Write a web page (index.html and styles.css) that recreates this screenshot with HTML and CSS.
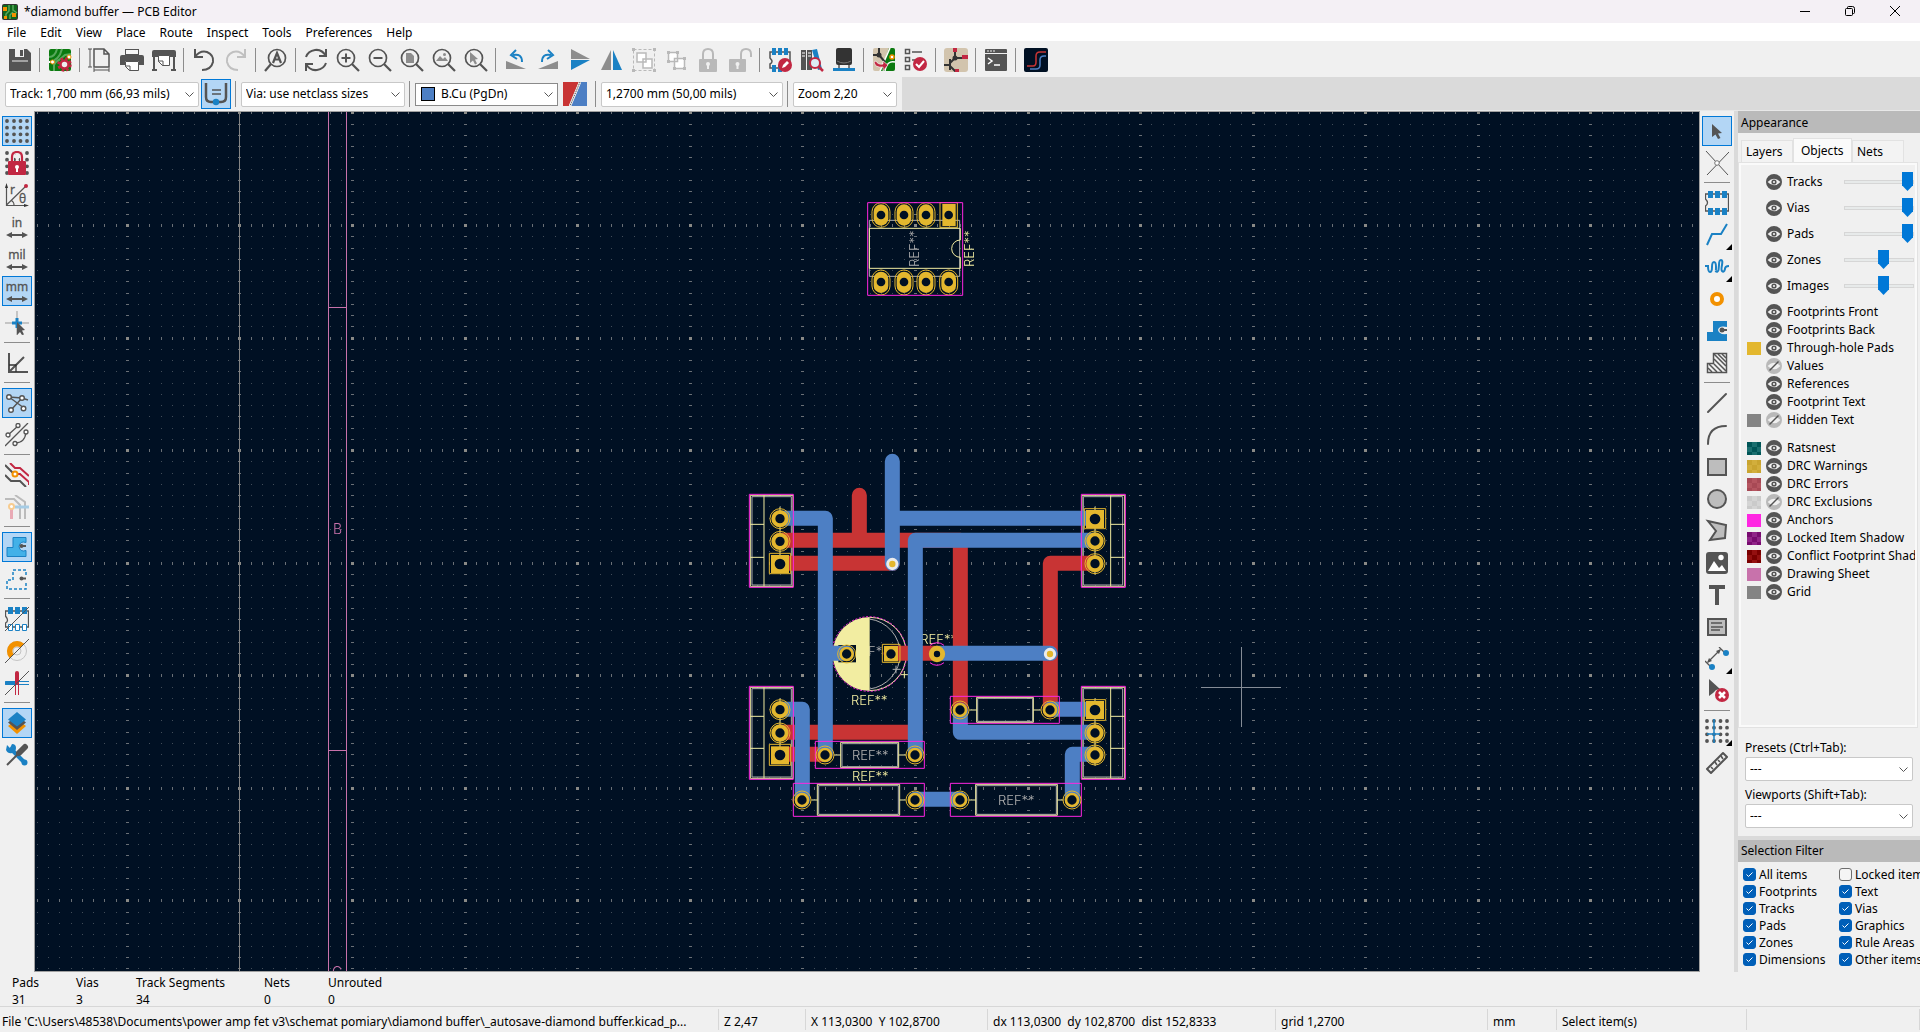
FILE: index.html
```html
<!DOCTYPE html>
<html lang="en">
<head>
<meta charset="utf-8">
<title>*diamond buffer — PCB Editor</title>
<link rel="stylesheet" href="styles.css">
</head>
<body>
<svg class="defs" aria-hidden="true">
  <symbol id="eye" viewBox="0 0 16 16"><circle cx="8" cy="8" r="8" fill="#545454"/><path d="M1.600 8Q8 1.500 14.400 8Q8 14.500 1.600 8Z" fill="#f0f0f0"/><circle cx="8" cy="8" r="2.600" fill="#545454"/><circle cx="8" cy="8" r="1.100" fill="#f0f0f0"/></symbol>
  <symbol id="eye-off" viewBox="0 0 16 16"><circle cx="8" cy="8" r="8" fill="#b9b9b9"/><path d="M1.600 8Q8 1.500 14.400 8Q8 14.500 1.600 8Z" fill="#f0f0f0"/><path d="M3.500 12.500L12.500 3.500" stroke="#545454" stroke-width="1.500"/></symbol>
  <symbol id="lens" viewBox="0 0 24 24"><circle cx="13" cy="10" r="8.500" fill="none" stroke="#545454" stroke-width="1.700"/></symbol>
  <symbol id="glass" viewBox="0 0 24 24"><circle cx="10" cy="10" r="8.500" fill="none" stroke="#545454" stroke-width="1.700"/><path d="M16 16l7 7" stroke="#545454" stroke-width="2.200"/></symbol>
  <symbol id="units" viewBox="0 0 24 24"><path d="M5 20h14" stroke="#545454" stroke-width="2"/><path d="M1 20l6-3v6zM23 20l-6-3v6z" fill="#545454"/></symbol>
  <symbol id="dots" viewBox="0 0 24 24"><path d="M2 2h.01M9 2h.01M15.500 2h.01M22 2h.01M2 8.700h.01M9 8.700h.01M15.500 8.700h.01M22 8.700h.01M2 15.300h.01M9 15.300h.01M15.500 15.300h.01M22 15.300h.01M2 22h.01M9 22h.01M15.500 22h.01M22 22h.01" stroke="#545454" stroke-width="3.800" stroke-linecap="round"/></symbol>
</svg>

<header class="titlebar">
  <svg class="logo" viewBox="0 0 16 16"><rect width="16" height="16" rx="2" fill="#333"/><rect x="1" y="1" width="14" height="14" fill="#10671c"/><path d="M7 1v6l-3 3v5M11 1v5l4 3M8 15v-4l3-3" stroke="#55a95b" stroke-width="1.500" fill="none"/><path d="M1 3h4v4H1zM10 9h4v4h-4zM2 12h3v3H2z" fill="#f29100"/></svg>
  <span>*diamond buffer — PCB Editor</span>
  <div class="window-buttons">
    <button aria-label="Minimize"><svg viewBox="0 0 10 10"><path d="M0 5.500h10"/></svg></button>
    <button aria-label="Restore"><svg viewBox="0 0 10 10"><rect x=".5" y="2.500" width="7" height="7" rx="1"/><path d="M2.500 2.500v-1q0-1 1-1h4q2 0 2 2v4q0 1-1 1h-1"/></svg></button>
    <button aria-label="Close"><svg viewBox="0 0 10 10"><path d="M0 0l10 10M10 0L0 10"/></svg></button>
  </div>
</header>

<nav class="menubar">
  <button>File</button><button>Edit</button><button>View</button><button>Place</button><button>Route</button><button>Inspect</button><button>Tools</button><button>Preferences</button><button>Help</button>
</nav>

<div class="toolbar main-tools">
  <button aria-label="Save"><svg viewBox="0 0 24 24"><path d="M1 1h18l4 4v18H1z" fill="#545454"/><path d="M7 1h9v8H7zM4 13h16v0H4z" fill="#f0f0f0"/><path d="M12 2h3v6h-3z" fill="#545454"/><path d="M4 13h16" stroke="#f0f0f0"/></svg></button>
  <i class="sep"></i>
  <button aria-label="Board setup"><svg viewBox="0 0 24 24"><rect x="1" y="1" width="22" height="22" rx="2" fill="#0b7a10"/><path d="M1 9q6 0 8-8M1 14q10-1 13-13M6 23v-6q1-3 5-5l6-5 6-1" stroke="#58a85c" stroke-width="2" fill="none"/><path d="M1 14h2M22 9h1" stroke="#fff" stroke-width="2"/><circle cx="4.500" cy="14" r="2" fill="#fff" stroke="#f29100"/><circle cx="21" cy="9" r="2" fill="#fff" stroke="#f29100"/><circle cx="16.500" cy="16.500" r="4" fill="#eee" stroke="#c22742" stroke-width="2.500"/><circle cx="16.500" cy="16.500" r="6" fill="none" stroke="#c22742" stroke-width="2.500" stroke-dasharray="2.700 2"/></svg></button>
  <i class="sep"></i>
  <button aria-label="Page settings"><svg viewBox="0 0 24 24" fill="none" stroke="#545454"><path d="M6 1h10l5 5v13H6zM16 1v5h5" stroke-width="1.500"/><path d="M2 1v18M0 1h4M0 19h4M6 22h15M6 20v4M21 20v4"/></svg></button>
  <button aria-label="Print"><svg viewBox="0 0 24 24"><path d="M5 1h14v6H5zM0 9q0-2 2-2h20q2 0 2 2v8h-5v-4H5v4H0z" fill="#545454"/><path d="M6 2h12v4H6z" fill="#f7f7f7"/><path d="M5.500 13.500h13v9h-9l-4-4z" fill="#fff" stroke="#545454"/><path d="M5 18h5v5" fill="none" stroke="#545454"/></svg></button>
  <button aria-label="Plot"><svg viewBox="0 0 24 24"><path d="M0 4q0-2 2-2h20q2 0 2 2v5H0zM1 9h2v13H1zM21 9h2v13h-2zM0 21h5v2H0zM19 21h5v2h-5z" fill="#545454"/><path d="M6.500 7.500h11v10h-7l-4-4z" fill="#fff" stroke="#545454"/><path d="M6 13h5v5" fill="none" stroke="#545454"/></svg></button>
  <i class="sep"></i>
  <button aria-label="Undo"><svg viewBox="0 0 24 24" fill="none" stroke="#545454" stroke-width="2"><path d="M3 1v8h8M3 9Q8 2 15 4q7 3 6 10-2 8-11 8"/></svg></button>
  <button aria-label="Redo" disabled><svg viewBox="0 0 24 24" fill="none" stroke="#c0c0c0" stroke-width="2"><path d="M21 1v8h-8M21 9Q16 2 9 4 2 7 3 14q2 8 11 8"/></svg></button>
  <i class="sep"></i>
  <button aria-label="Find"><svg viewBox="0 0 24 24"><use href="#lens"/><path d="M7 16l-6 7" stroke="#545454" stroke-width="2.200"/><path d="M9 15l4-10 4 10M10 11.500h6" fill="none" stroke="#545454" stroke-width="2.200"/></svg></button>
  <i class="sep"></i>
  <button aria-label="Refresh"><svg viewBox="0 0 24 24" fill="none" stroke="#545454" stroke-width="2"><path d="M2 9Q4 3 11 2q7-1 11 6M22 1v7h-7M22 15q-2 6-9 7-7 1-11-6M2 23v-7h7"/></svg></button>
  <button aria-label="Zoom in"><svg viewBox="0 0 24 24"><use href="#glass"/><path d="M10 5.500v9M5.500 10h9" stroke="#545454" stroke-width="2"/></svg></button>
  <button aria-label="Zoom out"><svg viewBox="0 0 24 24"><use href="#glass"/><path d="M5.500 10h9" stroke="#545454" stroke-width="2"/></svg></button>
  <button aria-label="Zoom to page"><svg viewBox="0 0 24 24"><use href="#glass"/><path d="M6 5h5l3 3v7H6z" fill="#8d8d8d"/></svg></button>
  <button aria-label="Zoom to objects"><svg viewBox="0 0 24 24"><use href="#glass"/><path d="M4 13l4-5 3 3 2-2 3 4z" fill="#8d8d8d"/><circle cx="12.500" cy="6.500" r="1.500" fill="#8d8d8d"/></svg></button>
  <button aria-label="Zoom to selection"><svg viewBox="0 0 24 24"><use href="#glass"/><path d="M6 4l8 7-3 .5 2 4-2 1-2-4-3 2.500z" fill="#8d8d8d"/></svg></button>
  <i class="sep"></i>
  <button aria-label="Rotate left"><svg viewBox="0 0 24 24"><path d="M2 13l20 8H2z" fill="#8d8d8d"/><path d="M9 7q9-2 9 7" fill="none" stroke="#1a81c4" stroke-width="2"/><path d="M12 2L7 7l6 4" fill="none" stroke="#1a81c4" stroke-width="2"/></svg></button>
  <button aria-label="Rotate right"><svg viewBox="0 0 24 24"><path d="M22 13L2 21h20z" fill="#8d8d8d"/><path d="M15 7q-9-2-9 7" fill="none" stroke="#1a81c4" stroke-width="2"/><path d="M12 2l5 5-6 4" fill="none" stroke="#1a81c4" stroke-width="2"/></svg></button>
  <button aria-label="Mirror vertically"><svg viewBox="0 0 24 24"><path d="M3 1l19 10H3z" fill="#8d8d8d"/><path d="M3 22l19-10H3z" fill="#1a81c4"/></svg></button>
  <button aria-label="Mirror horizontally"><svg viewBox="0 0 24 24"><path d="M11 2v20H1z" fill="#8d8d8d"/><path d="M13 2v20h9z" fill="#1a81c4"/></svg></button>
  <button aria-label="Group" disabled><svg viewBox="0 0 24 24" fill="#fff" stroke="#b9b9b9"><rect x="1.500" y="1.500" width="21" height="21" fill="none" stroke-dasharray="3 2"/><path d="M11 11h9v9h-9zM5 5h9v9H5z" stroke-width="1.500"/><path d="M0 0h3v3H0zM21 0h3v3h-3zM0 21h3v3H0zM21 21h3v3h-3z" fill="#b9b9b9" stroke="none"/></svg></button>
  <button aria-label="Ungroup" disabled><svg viewBox="0 0 24 24" fill="#fff" stroke="#b9b9b9"><path d="M10.500 10.500h10v10h-10zM4.500 4.500h9v9h-9z" stroke-width="1.500"/><path d="M3 3h3v3H3zM12 3h3v3h-3zM3 12h3v3H3zM9 19h3v3H9zM19 19h3v3h-3zM19 9h3v3h-3z" fill="#b9b9b9" stroke="none"/></svg></button>
  <button aria-label="Lock" disabled><svg viewBox="0 0 24 24"><path d="M7 11V6q0-5 5-5t5 5v5" fill="none" stroke="#b9b9b9" stroke-width="2"/><rect x="3" y="11" width="18" height="13" rx="1" fill="#b9b9b9"/><circle cx="12" cy="16" r="2" fill="#f0f0f0"/><path d="M11 16h2v5h-2z" fill="#f0f0f0"/></svg></button>
  <button aria-label="Unlock" disabled><svg viewBox="0 0 24 24"><path d="M13 11V6q0-5 5-5t5 5v3" fill="none" stroke="#b9b9b9" stroke-width="2"/><rect x="1" y="11" width="17" height="13" rx="1" fill="#b9b9b9"/><circle cx="9.500" cy="16" r="2" fill="#f0f0f0"/><path d="M8.500 16h2v5h-2z" fill="#f0f0f0"/></svg></button>
  <i class="sep"></i>
  <button aria-label="Footprint editor"><svg viewBox="0 0 24 24"><path d="M2 4h20v16H2v-4q4-2 0-6z" fill="none" stroke="#545454" stroke-width="1.500"/><path d="M4 0h4v7H4zM10 0h4v7h-4zM16 0h4v7h-4zM4 17h4v7H4zM10 17h4v7h-4z" fill="#1a81c4"/><circle cx="17" cy="17" r="7" fill="#c22742"/><path d="M14 20l1-3 4-4 2 2-4 4z" fill="#fff"/></svg></button>
  <button aria-label="Footprint library"><svg viewBox="0 0 24 24"><path d="M1 2h5v20H1zM7 2h5v20H7z" fill="#545454"/><path d="M2 5h3M2 8h3M8 5h3M8 8h3" stroke="#fff"/><path d="M12 2l5-1 5 20-4 1z" fill="#1a81c4"/><circle cx="15" cy="15" r="5" fill="#dcecf5" stroke="#c22742" stroke-width="2"/><path d="M19 19l4 4" stroke="#c22742" stroke-width="2.500"/></svg></button>
  <button aria-label="3D viewer"><svg viewBox="0 0 24 24"><rect x="4" y="0" width="16" height="17" rx="2" fill="#333"/><path d="M5 13q7 4 14 0" stroke="#777" fill="none"/><path d="M7 17v3M17 17v3" stroke="#545454" stroke-width="1.500"/><path d="M1 20h22v3H1z" fill="#1a81c4"/></svg></button>
  <i class="sep"></i>
  <button aria-label="Update from schematic"><svg viewBox="0 0 24 24"><rect x="1" y="0" width="22" height="23" rx="2" fill="#d2c4ad"/><path d="M17 0h4q2 0 2 2v19q0 2-2 2H9z" fill="#0b7a10"/><path d="M18 0L8 23M23 14q-8-2-10 9" stroke="#fff" stroke-width="1.500" fill="none"/><path d="M7 0v7H1M7 7l6 7" stroke="#333" stroke-width="2" fill="none"/><circle cx="7" cy="7" r="2.500" fill="#333"/><circle cx="20" cy="9" r="2" fill="#fff" stroke="#f29100" stroke-width="1.500"/><path d="M2 14q1 6 9 5v4l5-6-5-4v3q-5 1-7-3z" fill="#c22742" stroke="#fff" stroke-width=".6"/></svg></button>
  <button aria-label="Design rules check"><svg viewBox="0 0 24 24"><path d="M1.500 1.500h4v4h-4zM1.500 9.500h4v4h-4zM1.500 17.500h4v4h-4zM8 4h10M8 12h5" fill="none" stroke="#545454" stroke-width="1.500"/><circle cx="16" cy="16" r="7" fill="#c22742"/><path d="M12 16l3 3 5-6" fill="none" stroke="#fff" stroke-width="2"/></svg></button>
  <i class="sep"></i>
  <button aria-label="Schematic editor"><svg viewBox="0 0 24 24"><rect x="0" y="0" width="24" height="24" rx="3" fill="#d2c4ad"/><path d="M0 17h6M6 11v11M6 15l5-5M6 18l6 6M11 10V0M11 10h11" stroke="#333" stroke-width="2" fill="none"/><path d="M9 0h4v4H9zM18 7h6v4h-6zM11 21h4v3h-4z" fill="#c22742"/><circle cx="11" cy="10" r="2.500" fill="#333"/></svg></button>
  <i class="sep"></i>
  <button aria-label="Scripting console"><svg viewBox="0 0 24 24"><rect x="1" y="1" width="22" height="22" rx="1" fill="#545454"/><path d="M1 5.500h22" stroke="#f0f0f0"/><path d="M3 3h2M6 3h2M9 3h2" stroke="#f0f0f0"/><path d="M4 10l4 3-4 3M10 17h6" stroke="#fff" stroke-width="1.500" fill="none"/></svg></button>
  <i class="sep"></i>
  <button aria-label="Plugin"><svg viewBox="0 0 24 24"><rect width="24" height="24" rx="2" fill="#001023"/><path d="M3 18h6q3 0 3-4V8q0-4 4-4h6" fill="none" stroke="#c83434" stroke-width="1.500"/><path d="M6 21h6q4 0 4-4v-5q0-4 4-4h2" fill="none" stroke="#4d7fc4" stroke-width="1.500"/></svg></button>
</div>

<div class="option-row">
  <div class="toolbar options">
    <select class="combo track" aria-label="Track width"><option>Track: 1,700 mm (66,93 mils)</option></select>
    <button class="on" aria-label="Use track width"><svg viewBox="0 0 24 24"><path d="M2 1v14q0 5 5 5h10q5 0 5-5V1" fill="none" stroke="#545454" stroke-width="2.500"/><path d="M8 8h9M8 12h9" stroke="#545454" stroke-width="1.300"/><circle cx="12" cy="20" r="3.200" fill="#1a81c4"/></svg></button>
    <i class="sep"></i>
    <select class="combo via" aria-label="Via size"><option>Via: use netclass sizes</option></select>
    <i class="sep"></i>
    <span class="layer-box"><i class="layer-color"></i><select class="combo layer" aria-label="Active layer"><option>B.Cu (PgDn)</option></select></span>
    <button class="layer-pair" aria-label="Layer pair"><svg viewBox="0 0 24 24"><path d="M0 0h16L6 24H0z" fill="#c83434"/><path d="M18 0h6v24H8z" fill="#4d7fc4"/><path d="M17 0L7 24" stroke="#eee" stroke-width="2.500"/><path d="M17 0L7 24" stroke="#444" stroke-dasharray="1 1"/></svg></button>
    <i class="sep"></i>
    <select class="combo grid" aria-label="Grid"><option>1,2700 mm (50,00 mils)</option></select>
    <i class="sep"></i>
    <select class="combo zoom" aria-label="Zoom"><option>Zoom 2,20</option></select>
  </div>
</div>

<main class="workspace">
  <div class="side-tools">
    <button class="on" aria-label="Show grid"><svg viewBox="0 0 24 24"><use href="#dots"/></svg></button>
    <button aria-label="Grid overrides"><svg viewBox="0 0 24 24"><use href="#dots"/><path d="M7 11V6q0-5 5-5t5 5v5" fill="none" stroke="#f0f0f0" stroke-width="4"/><path d="M7 11V6q0-5 5-5t5 5v5" fill="none" stroke="#c22742" stroke-width="2.200"/><rect x="3" y="10" width="18" height="14" rx="1" fill="#c22742"/><circle cx="12" cy="16" r="2" fill="#fff"/><path d="M11 16h2v5h-2z" fill="#fff"/></svg></button>
    <button aria-label="Polar coordinates"><svg viewBox="0 0 24 24"><path d="M1.500 23V3M1 22.500h20M1.500 22L21 3M6 17q3 2 3 5" fill="none" stroke="#545454" stroke-width="1.200"/><path d="M1.500 0l-1.500 5h3zM24 22.500l-5-1.500v3z" fill="#333"/><circle cx="21" cy="3" r="2" fill="#c22742"/><text x="5" y="11" font-size="11">r</text><text x="14" y="20" font-size="12" font-style="italic">θ</text></svg></button>
    <button aria-label="Inches"><svg viewBox="0 0 24 24"><use href="#units"/><text x="12" y="12" text-anchor="middle">in</text></svg></button>
    <button aria-label="Mils"><svg viewBox="0 0 24 24"><use href="#units"/><text x="12" y="12" text-anchor="middle">mil</text></svg></button>
    <button class="on" aria-label="Millimetres"><svg viewBox="0 0 24 24"><use href="#units"/><text x="12" y="12" text-anchor="middle">mm</text></svg></button>
    <button aria-label="Full-window crosshairs"><svg viewBox="0 0 24 24"><path d="M12 0v24M0 12h24" stroke="#999"/><path d="M12 7v10M7 12h10" stroke="#1a81c4" stroke-width="3"/><path d="M12 11l8 8-3 .5 2 4-2 .5-2-3-3 3z" fill="#545454"/></svg></button>
    <i class="sep"></i>
    <button aria-label="Limit angles"><svg viewBox="0 0 24 24"><path d="M4 2v19h19M4 21L19 6" fill="none" stroke="#545454" stroke-width="2"/><path d="M4 14h7v7" fill="none" stroke="#333" stroke-width="1.300"/></svg></button>
    <i class="sep"></i>
    <button class="on" aria-label="Show ratsnest"><svg viewBox="0 0 24 24" fill="#fff" stroke="#545454" stroke-width="1.400"><path d="M4 6l13 1 6 2M4 6l15 11M17 7L6 19" fill="none"/><circle cx="4" cy="6" r="2.300"/><circle cx="17" cy="7" r="2.300"/><circle cx="18.500" cy="17.500" r="2.300"/><circle cx="6" cy="19" r="2.300"/></svg></button>
    <button aria-label="Curved ratsnest"><svg viewBox="0 0 24 24" fill="#fff" stroke="#545454" stroke-width="1.300"><path d="M0 23L23 0M3 12L13 3M10 20q10 0 11-11" fill="none"/><circle cx="3" cy="12" r="2"/><circle cx="13" cy="2.500" r="2"/><circle cx="21" cy="9" r="2"/><circle cx="10" cy="20.500" r="2"/></svg></button>
    <i class="sep"></i>
    <button aria-label="High contrast nets"><svg viewBox="0 0 24 24" fill="none" stroke-width="2"><path d="M0 2l10 10M0 12l6 6h9l6 6" stroke="#545454"/><path d="M5 0l5 5h5l9 8M10 11h5l9 8v3" stroke="#c22742"/><circle cx="10" cy="11" r="2.500" fill="#fff" stroke="#f29100"/></svg></button>
    <button aria-label="Net highlighting" disabled><svg viewBox="0 0 24 24" fill="none"><path d="M0 4h9l6 6v14M10 0l10 7v17" stroke="#bbb" stroke-width="2"/><path d="M10 12h14" stroke="#a6cce5" stroke-width="3"/><path d="M6.500 14v10" stroke="#e9aab5" stroke-width="3"/><circle cx="6.500" cy="11.500" r="2.500" fill="#fff" stroke="#f7cc90" stroke-width="2"/></svg></button>
    <i class="sep"></i>
    <button class="on" aria-label="Show zone fills"><svg viewBox="0 0 24 24"><path d="M2 21.500v-9h6v-10h13v5q-6-2-7 4 1 6 7 4v6z" fill="#43b1e8" stroke="#1a81c4"/><circle cx="16.500" cy="11" r="2" fill="#545454"/><path d="M16 11h5" stroke="#545454" stroke-width="2"/></svg></button>
    <button aria-label="Show zone outlines"><svg viewBox="0 0 24 24"><path d="M21 16v6H2v-9h6V3h13v5" fill="none" stroke="#1a81c4" stroke-width="1.500" stroke-dasharray="3 2"/><circle cx="16.500" cy="11.500" r="2" fill="#545454"/><path d="M16 11.500h5" stroke="#545454" stroke-width="2"/></svg></button>
    <i class="sep"></i>
    <button aria-label="Sketch footprint pads"><svg viewBox="0 0 24 24"><path d="M.5 4h23v16H.5v-4q4-2 0-7z" fill="none" stroke="#545454" stroke-width="1.300"/><path d="M3 0h5v7H3zM10 0h5v7h-5zM17 0h5v7h-5z" fill="#1a81c4"/><path d="M3.500 17.500h4v6h-4zM10.500 17.500h4v6h-4zM17.500 17.500h4v6h-4z" fill="#fff" stroke="#1a81c4"/><path d="M0 24L24 0" stroke="#545454"/></svg></button>
    <button aria-label="Sketch vias"><svg viewBox="0 0 24 24"><circle cx="12" cy="12" r="9.500" fill="none" stroke="#c4c4c4"/><circle cx="12" cy="12" r="4" fill="none" stroke="#c4c4c4"/><path d="M6.700 17.300A7.500 7.500 0 0 1 17.300 6.700" fill="none" stroke="#f29100" stroke-width="5.500"/><path d="M0 24L24 0" stroke="#545454"/></svg></button>
    <button aria-label="Sketch tracks"><svg viewBox="0 0 24 24"><path d="M1 12h11" stroke="#1a81c4" stroke-width="4" stroke-linecap="round"/><path d="M12 10.500h12M12 13.500h12" stroke="#1a81c4"/><path d="M12 2v10" stroke="#c22742" stroke-width="4" stroke-linecap="round"/><path d="M10.500 12v12M13.500 12v12" stroke="#c22742"/><path d="M0 24L24 0" stroke="#545454"/></svg></button>
    <i class="sep"></i>
    <button class="on" aria-label="Layers manager"><svg viewBox="0 0 24 24"><path d="M3 15l9-7 9 7-9 8z" fill="#f29100"/><path d="M3 11.500l9-7 9 7-9 7.500z" fill="#545454"/><path d="M3 8.500L12 1l9 7.500-9 7z" fill="#1a81c4"/></svg></button>
    <button aria-label="Properties"><svg viewBox="0 0 24 24"><path d="M5 5l14 14" stroke="#1a81c4" stroke-width="4"/><path d="M2 2l3 3 2-4q4 0 4 4t-4 5-6-3z" fill="#1a81c4"/><circle cx="19.500" cy="19.500" r="3" fill="#1a81c4"/><path d="M2 22L13 11" stroke="#545454" stroke-width="2"/><path d="M14 10l6-6" stroke="#545454" stroke-width="6" stroke-linecap="round"/></svg></button>
  </div>

  <section class="board" aria-label="Board">
    <canvas class="grid-dots"></canvas>
    <svg class="drawing">
      <g transform="translate(-35 -112)">
        <path d="M239.500 112V972" stroke="#848484"/>
        <path d="M328.500 112V972M346.500 112V972M328 307.500h18M328 750.500h18" stroke="#c872ab" fill="none"/>
        <text class="sheet" x="333" y="534">B</text><text class="sheet" x="332" y="977">C</text>
        <g class="fine" transform="translate(850 190) scale(.33333)">
          <path d="M58 91h271v168H58z" stroke="#afafaf"/>
          <g fill="#e3b72e" stroke="none">
            <rect x="71" y="43" width="44" height="64" rx="22"/><rect x="140" y="43" width="44" height="64" rx="22"/><rect x="206" y="43" width="44" height="64" rx="22"/><rect x="277" y="42" width="40" height="66"/>
            <rect x="71" y="245" width="44" height="64" rx="22"/><rect x="140" y="245" width="44" height="64" rx="22"/><rect x="206" y="245" width="44" height="64" rx="22"/><rect x="274" y="245" width="44" height="64" rx="22"/>
          </g>
          <g stroke="#e3b72e"><rect x="66" y="38" width="54" height="74" rx="27"/><rect x="135" y="38" width="54" height="74" rx="27"/><rect x="201" y="38" width="54" height="74" rx="27"/><rect x="270" y="38" width="52" height="74"/><rect x="66" y="240" width="54" height="75" rx="27"/><rect x="135" y="240" width="54" height="75" rx="27"/><rect x="201" y="240" width="54" height="75" rx="27"/><rect x="269" y="240" width="54" height="75" rx="27"/></g>
          <g fill="#001023" stroke="none"><circle cx="93" cy="75" r="13"/><circle cx="162" cy="75" r="13"/><circle cx="228" cy="75" r="13"/><circle cx="296" cy="75" r="13"/><circle cx="93" cy="276" r="13"/><circle cx="162" cy="276" r="13"/><circle cx="228" cy="276" r="13"/><circle cx="296" cy="276" r="13"/></g>
          <path d="M331 150V115H58v120h273v-33a26 26 0 0 1 0-52" stroke="#f2eda1"/>
          <path d="M53 38h285v278H53z" stroke="#ff26e2"/>
          <text class="ref fab" transform="translate(207 231) rotate(-90)">REF**</text>
          <text class="ref" transform="translate(372 231) rotate(-90)">REF**</text>
        </g>
        <g class="fine" transform="translate(740 440) scale(.33333)">
          <g stroke="#afafaf" stroke-width="3">
            <path d="M36 170h118v265H36zM36 746h118v265H36zM1030 170h118v265h-118zM1030 746h118v265h-118zM306 911h167v69H306zM236 1037h239v86H236zM713 775h165v69H713zM710 1037h239v86H710z"/>
            <path d="M389 537a106 106 0 0 1 0 210M458 688h24M468 677v23"/>
          </g>
          <text class="ref fab" x="361" y="648">EF*</text>
          <path d="M389 531a111 111 0 0 0 0 222z" fill="#f2eda1" stroke="none"/>
          <path d="M295 615h53v52h-53z" fill="#001023" stroke="none"/>
          <g stroke="#f2eda1">
            <path d="M31 166h128v273H31zM72 166v273M31 253h41M31 352h41M31 742h128v273H31zM72 742v273M31 829h41M31 925h41M1026 166h128v273h-128zM1112 166v273M1112 253h42M1112 352h42M1026 742h128v273h-128zM1112 742v273M1112 829h42M1112 925h42M120 200v170M120 775v170M1065 200v204M1065 775v202"/>
            <path d="M389 532a110 110 0 0 1 0 220M302 907h174v76H302zM282 945h20M476 945h22M232 1033h247v93H232zM214 1080h18M479 1080h18M710 772h170v75H710zM688 810h22M880 810h22M707 1033h245v93H707zM686 1080h21M952 1080h18M482 704h24M493 693v22"/>
          </g>
          <text class="ref" x="541" y="611">REF**</text>
          <circle cx="388" cy="642" r="112" stroke="#ff26e2" stroke-dasharray="6 5"/>
          <g stroke="#c83434" stroke-width="45" stroke-linejoin="round" stroke-linecap="round">
            <path d="M120 301H661V810M120 370H457M358 166V301M1065 370H931V810M453 640H591M120 877H526M120 943H255"/>
          </g>
          <g stroke="#4d7fc4" stroke-width="45" stroke-linejoin="round" stroke-linecap="round">
            <path d="M120 235H256V943M457 64V370M457 235H1065M1065 301H526V943M256 640H320M591 640H931M120 808H187V1080M526 1078H660M1065 943H997V1080M931 808H1065M661 810V877H1065"/>
          </g>
          <g stroke="#ff26e2">
            <path d="M28 163h132v279H28zM28 739h132v279H28zM1024 163h132v279h-132zM1024 739h132v279h-132zM226 904h327v81H226zM160 1030h393v99H160zM631 769h327v81H631zM631 1030h393v99H631z"/>
            <path d="M570 616a32 32 0 0 1 42 0M570 668a32 32 0 0 0 42 0"/>
          </g>
          <g fill="#001023" stroke="#e3b72e" stroke-width="12">
            <circle cx="120" cy="236" r="20"/><circle cx="120" cy="304" r="20"/><circle cx="120" cy="809" r="20"/><circle cx="120" cy="879" r="20"/><circle cx="1065" cy="303" r="20"/><circle cx="1065" cy="371" r="20"/><circle cx="1065" cy="879" r="20"/><circle cx="1065" cy="945" r="20"/>
            <circle cx="591" cy="642" r="17" stroke-width="15"/>
          </g>
          <g fill="#001023" stroke="#e3b72e" stroke-width="8">
            <circle cx="320" cy="642" r="18"/><circle cx="255" cy="945" r="18"/><circle cx="525" cy="945" r="18"/><circle cx="186" cy="1080" r="18"/><circle cx="525" cy="1080" r="18"/><circle cx="660" cy="1080" r="18"/><circle cx="996" cy="1080" r="18"/><circle cx="660" cy="810" r="18"/><circle cx="930" cy="810" r="18"/>
          </g>
          <g fill="#e3b72e" stroke="none"><rect x="93" y="345" width="54" height="54"/><rect x="93" y="919" width="54" height="54"/><rect x="1038" y="210" width="54" height="54"/><rect x="1038" y="783" width="54" height="54"/><rect x="432" y="618" width="42" height="46"/></g>
          <g fill="#001023" stroke="none"><circle cx="120" cy="372" r="16"/><circle cx="120" cy="945" r="16"/><circle cx="1065" cy="237" r="16"/><circle cx="1065" cy="810" r="16"/><circle cx="453" cy="642" r="14"/></g>
          <g stroke="#e3b72e">
            <circle cx="120" cy="236" r="30"/><circle cx="120" cy="304" r="30"/><circle cx="120" cy="809" r="30"/><circle cx="120" cy="879" r="30"/><circle cx="1065" cy="303" r="30"/><circle cx="1065" cy="371" r="30"/><circle cx="1065" cy="879" r="30"/><circle cx="1065" cy="945" r="30"/>
            <circle cx="255" cy="945" r="27"/><circle cx="525" cy="945" r="27"/><circle cx="186" cy="1080" r="27"/><circle cx="525" cy="1080" r="27"/><circle cx="660" cy="1080" r="27"/><circle cx="996" cy="1080" r="27"/><circle cx="660" cy="810" r="27"/><circle cx="930" cy="810" r="27"/><circle cx="320" cy="642" r="27"/>
            <path d="M88 340h64v61H88zM88 913h64v63H88zM1033 206h64v60h-64zM1033 779h64v62h-64zM427 613h53v54h-53z"/>
          </g>
          <g fill="#e3b72e" stroke="#ececec" stroke-width="9"><circle cx="457" cy="372" r="14"/><circle cx="930" cy="642" r="14"/></g>
          <text class="ref" x="333" y="795">REF**</text><text class="ref fab" x="336" y="960">REF**</text><text class="ref" x="336" y="1022">REF**</text><text class="ref fab" x="774" y="1095">REF**</text>
        </g>
        <path d="M1201 687.500h80M1241.500 647v80" stroke="#858c96"/>
      </g>
    </svg>
  </section>

  <div class="side-tools">
    <button class="on" aria-label="Select"><svg viewBox="0 0 24 24"><path d="M7 5l10 9-4 .5 2.500 4.500-2.500 1-2.500-4.500L7 18z" fill="#545454"/></svg></button>
    <button aria-label="Local ratsnest"><svg viewBox="0 0 24 24"><path d="M1 0l22 24M24 1L2 24" stroke="#545454"/><circle cx="12" cy="12" r="2.300" fill="#fff" stroke="#777"/></svg></button>
    <i class="sep"></i>
    <button aria-label="Place footprint"><svg viewBox="0 0 24 24"><path d="M.5 3h23v17H.5v-5q4-3 0-7z" fill="none" stroke="#545454" stroke-width="1.300"/><path d="M3 0h5v7H3zM10 0h5v7h-5zM17 0h5v7h-5zM3 17h5v7H3zM10 17h5v7h-5zM17 17h5v7h-5z" fill="#1a81c4"/></svg></button>
    <button class="more" aria-label="Route tracks"><svg viewBox="0 0 24 24"><path d="M2 22l5-11h9l6-10" fill="none" stroke="#1a81c4" stroke-width="2"/></svg></button>
    <button class="more" aria-label="Tune length"><svg viewBox="0 0 24 24"><path d="M0 11h3q0 6 2 6 2 0 2-5t2-5 2 5-.5 4q2 2 3-1l.5-5q0-5 2-5t1 5 0 6q2 2 3-2 0-3 4-3" fill="none" stroke="#1a81c4" stroke-width="2"/></svg></button>
    <button aria-label="Add via"><svg viewBox="0 0 24 24"><circle cx="12" cy="12" r="5" fill="#fff" stroke="#f29100" stroke-width="4"/></svg></button>
    <button aria-label="Add zone"><svg viewBox="0 0 24 24"><path d="M2 22V13h6V2h14v6q-8-2-9 3 1 5 9 4v7z" fill="#1a81c4"/><circle cx="17" cy="11" r="2.500" fill="#545454"/><path d="M16 11h6" stroke="#545454" stroke-width="2"/></svg></button>
    <button aria-label="Add rule area"><svg viewBox="0 0 24 24"><path d="M2.500 21.500v-9h6v-10h13v19z" fill="none" stroke="#545454" stroke-width="1.500"/><path d="M9 3l12 12M9 8l12 12M13 3l8 8M17 3l4 4M9 13l8 8M4 13l8 8M3 17l4 4" stroke="#545454" stroke-width="1.500"/></svg></button>
    <i class="sep"></i>
    <button aria-label="Draw line"><svg viewBox="0 0 24 24"><path d="M3 21L21 3" stroke="#545454" stroke-width="2" stroke-linecap="round"/></svg></button>
    <button aria-label="Draw arc"><svg viewBox="0 0 24 24"><path d="M3 21Q3 3 21 3" fill="none" stroke="#545454" stroke-width="2" stroke-linecap="round"/></svg></button>
    <button aria-label="Draw rectangle"><svg viewBox="0 0 24 24"><path d="M3 4h18v16H3z" fill="#bdbdbd" stroke="#545454" stroke-width="2"/></svg></button>
    <button aria-label="Draw circle"><svg viewBox="0 0 24 24"><circle cx="12" cy="12" r="9" fill="#bdbdbd" stroke="#545454" stroke-width="2"/></svg></button>
    <button aria-label="Draw polygon"><svg viewBox="0 0 24 24"><path d="M3 2l18 4-1 13-15 2 6-9z" fill="#bdbdbd" stroke="#545454" stroke-width="2"/></svg></button>
    <button aria-label="Place image"><svg viewBox="0 0 24 24"><rect x="1" y="1" width="22" height="22" rx="3" fill="#545454"/><path d="M3 20l6-10 5 7 3-3 4 6z" fill="#fff"/><circle cx="16" cy="6.500" r="2.700" fill="#fff"/></svg></button>
    <button aria-label="Add text"><svg viewBox="0 0 24 24"><path d="M4 2h16v4h-6v16h-4V6H4z" fill="#545454"/></svg></button>
    <button aria-label="Add text box"><svg viewBox="0 0 24 24"><path d="M3 4h18v16H3z" fill="#bdbdbd" stroke="#545454" stroke-width="2"/><path d="M6 8h11M6 12h12M6 15h9" stroke="#545454" stroke-width="1.300"/></svg></button>
    <button class="more" aria-label="Add dimension"><svg viewBox="0 0 24 24"><path d="M3 15L15 3M0 14l6 6M14 0l6 6" stroke="#545454" stroke-width="1.300"/><path d="M2 16l2-5 3 3zM16 2l-5 2 3 3z" fill="#545454"/><circle cx="7" cy="20" r="3" fill="#1a81c4"/><circle cx="21" cy="6" r="3" fill="#1a81c4"/></svg></button>
    <button aria-label="Delete"><svg viewBox="0 0 24 24"><path d="M4 0l11 10-4 1-3 3-4 3z" fill="#545454"/><circle cx="17" cy="16" r="7" fill="#c22742"/><path d="M14 13l6 6M20 13l-6 6" stroke="#fff" stroke-width="2.500"/></svg></button>
    <i class="sep"></i>
    <button class="more" aria-label="Grid origin"><svg viewBox="0 0 24 24"><use href="#dots"/><path d="M9 0v24M2 15h13" stroke="#1a81c4" stroke-width="1.500"/></svg></button>
    <button aria-label="Measure"><svg viewBox="0 0 24 24"><path d="M2 18L18 2l4 4L6 22z" fill="none" stroke="#545454" stroke-width="2" stroke-linejoin="round"/><path d="M8 18l-2-2M12 14l-2-3M15 11l-2-2M18 8l-2-3" stroke="#545454" stroke-width="1.600"/></svg></button>
  </div>

  <aside class="panels">
    <h2>Appearance</h2>
    <div class="tabs" role="tablist"><button role="tab">Layers</button><button role="tab" class="current" aria-selected="true">Objects</button><button role="tab">Nets</button></div>
    <div class="objects">
      <div class="row tall"><i></i><button aria-label="Toggle tracks"><svg><use href="#eye"/></svg></button><label for="o1">Tracks</label><input id="o1" type="range" value="100"></div>
      <div class="row tall"><i></i><button aria-label="Toggle vias"><svg><use href="#eye"/></svg></button><label for="o2">Vias</label><input id="o2" type="range" value="100"></div>
      <div class="row tall"><i></i><button aria-label="Toggle pads"><svg><use href="#eye"/></svg></button><label for="o3">Pads</label><input id="o3" type="range" value="100"></div>
      <div class="row tall"><i></i><button aria-label="Toggle zones"><svg><use href="#eye"/></svg></button><label for="o4">Zones</label><input id="o4" type="range" value="58"></div>
      <div class="row tall group-end"><i></i><button aria-label="Toggle images"><svg><use href="#eye"/></svg></button><label for="o5">Images</label><input id="o5" type="range" value="58"></div>
      <div class="row"><i></i><button aria-label="Toggle"><svg><use href="#eye"/></svg></button><span>Footprints Front</span></div>
      <div class="row"><i></i><button aria-label="Toggle"><svg><use href="#eye"/></svg></button><span>Footprints Back</span></div>
      <div class="row"><i class="pads"></i><button aria-label="Toggle"><svg><use href="#eye"/></svg></button><span>Through-hole Pads</span></div>
      <div class="row"><i></i><button aria-label="Toggle"><svg><use href="#eye-off"/></svg></button><span>Values</span></div>
      <div class="row"><i></i><button aria-label="Toggle"><svg><use href="#eye"/></svg></button><span>References</span></div>
      <div class="row"><i></i><button aria-label="Toggle"><svg><use href="#eye"/></svg></button><span>Footprint Text</span></div>
      <div class="row last"><i class="gray"></i><button aria-label="Toggle"><svg><use href="#eye-off"/></svg></button><span>Hidden Text</span></div>
      <div class="row"><i class="ratsnest checker"></i><button aria-label="Toggle"><svg><use href="#eye"/></svg></button><span>Ratsnest</span></div>
      <div class="row"><i class="warn checker"></i><button aria-label="Toggle"><svg><use href="#eye"/></svg></button><span>DRC Warnings</span></div>
      <div class="row"><i class="error checker"></i><button aria-label="Toggle"><svg><use href="#eye"/></svg></button><span>DRC Errors</span></div>
      <div class="row"><i class="excl checker"></i><button aria-label="Toggle"><svg><use href="#eye-off"/></svg></button><span>DRC Exclusions</span></div>
      <div class="row"><i class="anchor"></i><button aria-label="Toggle"><svg><use href="#eye"/></svg></button><span>Anchors</span></div>
      <div class="row"><i class="locked checker"></i><button aria-label="Toggle"><svg><use href="#eye"/></svg></button><span>Locked Item Shadow</span></div>
      <div class="row"><i class="conflict checker"></i><button aria-label="Toggle"><svg><use href="#eye"/></svg></button><span>Conflict Footprint Shadow</span></div>
      <div class="row"><i class="sheet-color"></i><button aria-label="Toggle"><svg><use href="#eye"/></svg></button><span>Drawing Sheet</span></div>
      <div class="row"><i class="gray"></i><button aria-label="Toggle"><svg><use href="#eye"/></svg></button><span>Grid</span></div>
    </div>
    <div class="presets">
      <label for="presets">Presets (Ctrl+Tab):</label>
      <select class="combo" id="presets"><option>---</option></select>
      <label for="views">Viewports (Shift+Tab):</label>
      <select class="combo" id="views"><option>---</option></select>
    </div>
    <h2 class="second">Selection Filter</h2>
    <div class="filter">
      <label><input type="checkbox" checked>All items</label><label><input type="checkbox">Locked items</label>
      <label><input type="checkbox" checked>Footprints</label><label><input type="checkbox" checked>Text</label>
      <label><input type="checkbox" checked>Tracks</label><label><input type="checkbox" checked>Vias</label>
      <label><input type="checkbox" checked>Pads</label><label><input type="checkbox" checked>Graphics</label>
      <label><input type="checkbox" checked>Zones</label><label><input type="checkbox" checked>Rule Areas</label>
      <label><input type="checkbox" checked>Dimensions</label><label><input type="checkbox" checked>Other items</label>
    </div>
  </aside>
</main>

<div class="messages">
  <table>
    <tr><th>Pads</th><th>Vias</th><th>Track Segments</th><th>Nets</th><th>Unrouted</th></tr>
    <tr><td>31</td><td>3</td><td>34</td><td>0</td><td>0</td></tr>
  </table>
</div>

<footer class="status">
  <span class="file">File 'C:\Users\48538\Documents\power amp fet v3\schemat pomiary\diamond buffer\_autosave-diamond buffer.kicad_p...</span>
  <span>Z 2,47</span>
  <span>X 113,0300  Y 102,8700</span>
  <span>dx 113,0300  dy 102,8700  dist 152,8333</span>
  <span>grid 1,2700</span>
  <span>mm</span>
  <span>Select item(s)</span>
  <span></span>
</footer>
<script src="grid.js"></script>
</body>
</html>
```
FILE: styles.css
```css
* { box-sizing: border-box; }
body {
  margin: 0;
  height: 100vh;
  display: flex;
  flex-direction: column;
  overflow: hidden;
  background: #f0f0f0;
  color: #000;
  font: 12px/16px "Noto Sans", "Open Sans", sans-serif;
}
button, select, input { font: inherit; color: inherit; margin: 0; }
button { border: 0; padding: 0; background: none; }
.defs { position: absolute; width: 0; height: 0; }

.titlebar { display: flex; align-items: center; height: 23px; padding-left: 2px; background: #f4f0f5; flex: none; }
.logo { width: 16px; height: 16px; margin-right: 6px; }
.window-buttons { display: flex; margin-left: auto; padding-right: 3px; }
.window-buttons button { width: 45px; height: 22px; }
.window-buttons svg { width: 10px; height: 10px; fill: none; stroke: #000; overflow: visible; }

.menubar { display: flex; height: 18px; padding: 2px 0 0 7px; gap: 14px; background: #fff; flex: none; }

.toolbar { display: flex; align-items: center; background: #f0f0f0; }
.main-tools { height: 36px; padding: 2px 4px 0; flex: none; }
.toolbar > button { width: 32px; height: 32px; flex: none; display: grid; place-items: center; }
.toolbar > button svg { width: 24px; height: 24px; display: block; }
.sep { flex: none; }
.toolbar .sep { width: 1px; height: 24px; margin: 0 4px 0 3px; background: #8c8c8c; }

.option-row { background: #dadada; height: 34px; flex: none; border-bottom: 1px solid #e8e8e8; }
.options { width: max-content; height: 34px; padding-left: 5px; padding-right: 5px; }
.options .sep { margin: 0 5px 0 4px; height: 26px; }
.options > .on { width: 30px; height: 30px; margin-left: 2px; }
.on { background: #b3d6f5; outline: 1px solid #0078d7; outline-offset: -1px; }
.options > .layer-pair { width: 33px; }

.combo {
  appearance: none;
  height: 25px;
  padding: 0 22px 0 4px;
  border: 1px solid #c8c8c8;
  border-radius: 2px;
  background: #fff url("data:image/svg+xml,%3Csvg xmlns='http://www.w3.org/2000/svg' width='9' height='5'%3E%3Cpath d='M.5.500l4 4 4-4' fill='none' stroke='%23555'/%3E%3C/svg%3E") no-repeat right 4px center;
}
.track { width: 194px; }
.via { width: 164px; }
.grid { width: 182px; }
.zoom { width: 104px; }
.layer-box { position: relative; display: flex; }
.layer { width: 143px; height: 23px; padding-left: 25px; border-color: #8a8a8a; border-radius: 0; }
.layer-color { position: absolute; left: 6px; top: 4px; width: 14px; height: 14px; background: #4d7fc4; border: 1px solid #000; }

.workspace { display: flex; flex: 1; min-height: 0; }
.side-tools { width: 34px; padding-top: 4px; display: flex; flex-direction: column; align-items: center; flex: none; }
.side-tools button { width: 30px; height: 30px; margin: 1px 0; display: grid; place-items: center; flex: none; position: relative; }
.side-tools svg { width: 24px; height: 24px; display: block; }
.side-tools text { font: 12px "Noto Sans", sans-serif; fill: #545454; stroke: #545454; stroke-width: .3px; }
.side-tools .sep { width: 26px; height: 1px; margin: 3px 0 4px; background: #8c8c8c; }
.more::after { content: ""; position: absolute; right: 0; bottom: 0; border: 3px solid; border-color: transparent #000 #000 transparent; }

.board { position: relative; flex: 1; overflow: hidden; background: #001023; border: 1px solid #a0a0a0; }
.grid-dots, .drawing { position: absolute; left: 0; top: 0; }
.drawing { width: 100%; height: 100%; }
.fine { fill: none; stroke-width: 3px; }
.ref { font: 300 39px Inter, sans-serif; fill: #f2eda1; stroke: none; }
.fab { fill: #afafaf; }
.sheet { font: 300 14px Inter, sans-serif; fill: #c872ab; }

.panels { width: 186px; flex: none; display: flex; flex-direction: column; border-left: 4px solid #dadada; overflow: hidden; }
.panels h2 { margin: 0; padding: 4px 3px 2px; height: 22px; flex: none; font-size: 12px; font-weight: 400; line-height: 16px; background: #bababa; }
.panels .second { height: 26px; border-top: 4px solid #dadada; padding-top: 3px; }
.tabs { display: flex; align-items: end; height: 30px; padding: 0 3px; flex: none; }
.tabs button { height: 23px; padding: 0 4px; background: #f3f3f3; border: 1px solid #e2e2e2; border-bottom: 0; width: 52px; text-align: left; }
.tabs .current { height: 25px; width: 59px; padding: 0 7px; background: #fafafa; }
.objects { flex: 1; min-height: 0; margin: 0 3px 0 1px; padding: 4px 0 0 6px; border: 2px solid #fafafa; outline: 1px solid #e2e2e2; outline-offset: 0; overflow: hidden; }
.row { display: grid; grid-template-columns: 14px 16px 52px 70px; column-gap: 5px; align-items: center; height: 18px; white-space: nowrap; }
.row.tall { height: 26px; }
.row.group-end { margin-bottom: 4px; }
.row.last { margin-bottom: 10px; }
.row > i { width: 14px; height: 13px; }
.row button, .row svg { display: block; width: 16px; height: 16px; }
.pads { background: #e3b72e; }
.gray { background: #848484; }
.anchor { background: #ff26e2; }
.sheet-color { background: #c872ab; }
.ratsnest { --a: #1a6e6f; --b: #005557; }
.warn { --a: #d2ae3c; --b: #c9a430; }
.error { --a: #b55560; --b: #a84955; }
.excl { --a: #d4d4d4; --b: #cacaca; }
.locked { --a: #902488; --b: #780b70; }
.conflict { --a: #941010; --b: #7a0000; }
.checker { background: conic-gradient(var(--a) 25%, var(--b) 0 50%, var(--a) 0 75%, var(--b) 0) 0 0 / 10px 10px; }

input[type="range"] { appearance: none; width: 70px; height: 19px; background: none; }
input[type="range"]::-webkit-slider-runnable-track { height: 4px; background: #e7eaea; border: 1px solid #d6d6d6; }
input[type="range"]::-webkit-slider-thumb { appearance: none; width: 11px; height: 19px; margin-top: -9px; background: #0078d7; clip-path: polygon(0 0, 100% 0, 100% 70%, 50% 100%, 0 70%); }

.presets { display: flex; flex-direction: column; padding: 12px 7px 3px; flex: none; }
.presets label { height: 18px; line-height: 18px; }
.presets .combo { height: 24px; margin-bottom: 5px; }

.filter { display: grid; grid-template-columns: 96px 100px; grid-auto-rows: 17px; padding: 4px 0 4px 5px; flex: none; }
.filter label { display: flex; align-items: center; gap: 3px; white-space: nowrap; }
input[type="checkbox"] { appearance: none; width: 13px; height: 13px; border: 1px solid #6e6e6e; border-radius: 3px; background: #f5f5f5; flex: none; }
input[type="checkbox"]:checked { border-color: #005fb8; background: #005fb8 url("data:image/svg+xml,%3Csvg xmlns='http://www.w3.org/2000/svg' width='11' height='11'%3E%3Cpath d='M2.500 5.500l2 2 4-4' fill='none' stroke='white'/%3E%3C/svg%3E"); }

.messages { height: 35px; padding: 2px 0 0 12px; border-bottom: 1px solid #d7d7d7; flex: none; }
.messages table { border-spacing: 0; line-height: 17px; }
.messages th, .messages td { padding: 0; font-weight: 400; text-align: left; min-width: 64px; }
.messages th:nth-child(4) { min-width: 63px; }
.messages th:nth-child(2), .messages td:nth-child(2) { min-width: 60px; }
.messages th:nth-child(3) { min-width: 128px; }

.status { display: grid; grid-template-columns: minmax(0, 719fr) 87fr 182fr 288fr 212fr 69fr 190fr 173fr; height: 25px; padding: 2px 0; flex: none; }
.status span { padding: 4px 4px 0 5px; border-right: 1px solid #d7d7d7; white-space: pre; overflow: hidden; text-overflow: ellipsis; line-height: 18px; }
.status .file { padding: 4px 0 0 2px; }
```
FILE: grid.js
```js
// Paints the editor grid: a dot per step, longer ticks on every tenth row and column.
const board = document.querySelector('.board');
const canvas = document.querySelector('.grid-dots');
const step = 11.258;
const origin = { x: 92.4, y: 113.5 };

function paint() {
  const w = canvas.width = board.clientWidth;
  const h = canvas.height = board.clientHeight;
  const ctx = canvas.getContext('2d');
  for (let i = -12; origin.x + i * step < w; i++) {
    for (let j = -12; origin.y + j * step < h; j++) {
      const x = Math.floor(origin.x + i * step);
      const y = Math.floor(origin.y + j * step);
      const bigX = i % 10 === 0;
      const bigY = j % 10 === 0;
      ctx.fillStyle = bigX && bigY ? '#8a8a86' : bigX || bigY ? '#6a7076' : '#424d59';
      ctx.fillRect(x - (bigX ? 1 : 0), y - (bigY ? 1 : 0), bigX ? 3 : 1, bigY ? 3 : 1);
    }
  }
}

paint();
window.addEventListener('resize', paint);
```
